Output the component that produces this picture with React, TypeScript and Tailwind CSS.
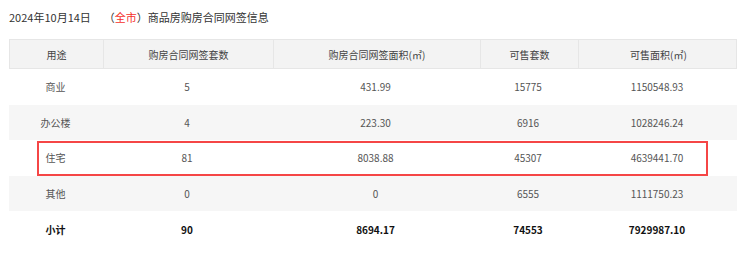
const font = "font-['Microsoft_YaHei','Noto_Sans_CJK_SC',sans-serif]";

const cols = ["用途", "购房合同网签套数", "购房合同网签面积(㎡)", "可售套数", "可售面积(㎡)"];

const rows = [
  ["商业", "5", "431.99", "15775", "1150548.93"],
  ["办公楼", "4", "223.30", "6916", "1028246.24"],
  ["住宅", "81", "8038.88", "45307", "4639441.70"],
  ["其他", "0", "0", "6555", "1111750.23"],
];

const total = ["小计", "90", "8694.17", "74553", "7929987.10"];

const grid = "grid grid-cols-[93px_170px_207px_98px_160px]";

export default function App() {
  return (
    <div className={`h-[253px] w-[740px] bg-white ${font}`}>
      <div className="flex h-[39px] items-center pb-[4px] pl-[9px] text-[11px] text-[#333]">
        <span>2024年10月14日</span>
        <span className="ml-[13px]">（</span>
        <span className="text-[#f5312c]">全市</span>
        <span>）商品房购房合同网签信息</span>
      </div>

      <div className="relative ml-[9px] w-[728px]">
        <div className={`${grid} h-[30px] border border-[#e6e6e6] bg-[#f3f3f3] text-[10px] text-[#444]`}>
          {cols.map((c, i) => (
            <div
              key={c}
              className={`flex items-center justify-center ${i > 0 ? "border-l border-[#e6e6e6]" : ""}`}
            >
              {c}
            </div>
          ))}
        </div>

        {rows.map((r, ri) => (
          <div
            key={r[0]}
            className={`${grid} h-[35.6px] text-[10px] text-[#555] ${ri % 2 === 1 ? "bg-[#f6f6f6]" : "bg-white"}`}
          >
            {r.map((v, i) => (
              <div key={i} className="flex items-center justify-center">
                {v}
              </div>
            ))}
          </div>
        ))}

        <div className={`${grid} h-[35.6px] text-[10px] font-bold text-[#111]`}>
          {total.map((v, i) => (
            <div key={i} className="flex items-center justify-center">
              {v}
            </div>
          ))}
        </div>

        {/* 标注框：住宅行 */}
        <div className="pointer-events-none absolute left-[28px] top-[102px] h-[35px] w-[671px] border-2 border-[#f54646]" />
      </div>
    </div>
  );
}
